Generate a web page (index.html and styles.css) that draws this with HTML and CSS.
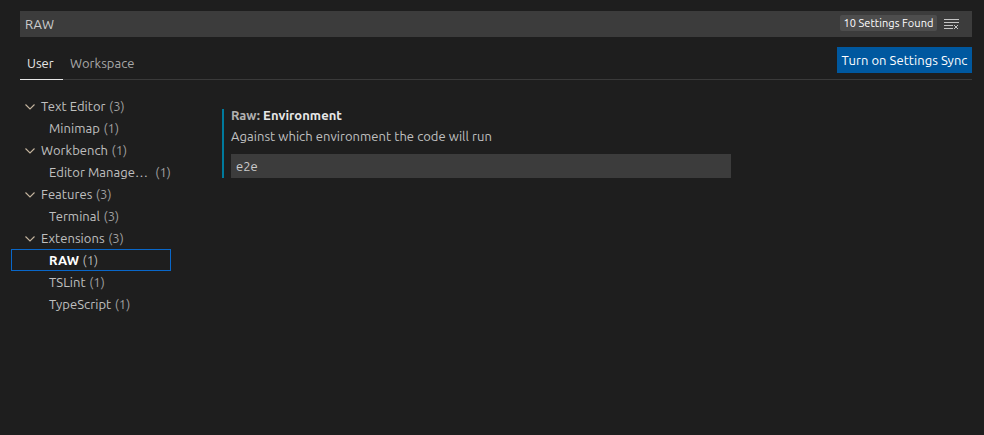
FILE: index.html
```html
<!DOCTYPE html>
<html lang="en">
<head>
<meta charset="utf-8">
<title>Settings</title>
<link rel="stylesheet" href="styles.css">
</head>
<body>
<main class="settings">
  <div class="search">
    <span class="query">RAW</span>
    <span class="badge">10 Settings Found</span>
    <svg class="clear" width="16" height="16" viewBox="0 0 16 16"><path d="M1 3.5h15M1 6.5h15M1 9.5h9M1 12.5h9" /><path d="M11 9l4 4M15 9l-4 4" /></svg>
  </div>
  <header class="header">
    <nav class="tabs">
      <a class="tab active">User</a>
      <a class="tab">Workspace</a>
    </nav>
    <button class="sync">Turn on Settings Sync</button>
  </header>
  <div class="body">
    <ul class="tree">
      <li class="row group"><svg class="chevron" width="10" height="6" viewBox="0 0 10 6"><path d="M.5.5L5 5 9.500.5"/></svg><span class="name">Text Editor</span><span class="count">(3)</span></li>
      <li class="row"><span class="name">Minimap</span><span class="count">(1)</span></li>
      <li class="row group"><svg class="chevron" width="10" height="6" viewBox="0 0 10 6"><path d="M.5.5L5 5 9.500.5"/></svg><span class="name">Workbench</span><span class="count">(1)</span></li>
      <li class="row"><span class="name clipped">Editor Manage…</span><span class="count">(1)</span></li>
      <li class="row group"><svg class="chevron" width="10" height="6" viewBox="0 0 10 6"><path d="M.5.5L5 5 9.500.5"/></svg><span class="name">Features</span><span class="count">(3)</span></li>
      <li class="row"><span class="name">Terminal</span><span class="count">(3)</span></li>
      <li class="row group"><svg class="chevron" width="10" height="6" viewBox="0 0 10 6"><path d="M.5.5L5 5 9.500.5"/></svg><span class="name">Extensions</span><span class="count">(3)</span></li>
      <li class="row selected"><span class="name">RAW</span><span class="count">(1)</span></li>
      <li class="row"><span class="name">TSLint</span><span class="count">(1)</span></li>
      <li class="row"><span class="name">TypeScript</span><span class="count">(1)</span></li>
    </ul>
    <section class="setting">
      <h2 class="title"><span class="category">Raw:</span> Environment</h2>
      <p class="description">Against which environment the code will run</p>
      <div class="field">e2e</div>
    </section>
  </div>
</main>
</body>
</html>
```
FILE: styles.css
```css
* { box-sizing: border-box; }
body {
  margin: 0;
  background: #1e1e1e;
  color: #c0c0c0;
  font: 13px/22px Ubuntu, "Noto Sans", sans-serif;
  letter-spacing: .05px;
  overflow: hidden;
}
.settings { height: 435px; padding: 11px 12px 0 11px; }
.search {
  display: flex;
  align-items: center;
  height: 26px;
  margin-left: 9px;
  padding: 0 13px 0 5px;
  background: #3c3c3c;
  color: #ccc;
}
.query { flex: 1; }
.badge {
  width: 97px;
  height: 16px;
  margin: 0 6px 2px 0;
  border-radius: 2px;
  background: #4d4d4d;
  color: #fff;
  font-size: 11px;
  line-height: 16px;
  text-align: center;
  white-space: nowrap;
}
.clear { fill: none; stroke: #c5c5c5; stroke-width: 1; }
.header {
  display: flex;
  justify-content: space-between;
  height: 43px;
  margin-left: 9px;
  border-bottom: 1px solid #3a3a3a;
}
.tabs { display: flex; padding-top: 15px; }
.tab { height: 28px; padding: 0 8px; color: #a8a8a8; }
.tab.active { width: 43px; margin-right: -1px; padding-left: 7px; border-bottom: 1px solid #e7e7e7; color: #e7e7e7; }
.sync {
  width: 135px;
  height: 26px;
  margin-top: 10px;
  padding: 0;
  border: 0;
  background: #00589f;
  color: #fff;
  font: inherit;
  letter-spacing: inherit;
  white-space: nowrap;
}
.body { display: flex; padding-top: 15px; }
.tree { width: 160px; margin: 0; padding: 0; list-style: none; }
.row {
  display: flex;
  gap: 3.5px;
  height: 22px;
  padding-left: 38px;
  line-height: 22px;
  white-space: nowrap;
}
.group { align-items: center; padding-left: 14px; }
.group .name { margin-left: 2.5px; }
.chevron { position: relative; top: 1px; fill: none; stroke: #c5b59f; stroke-width: 1.1; }
.count { color: #a0a0a0; }
.clipped { width: 103px; }
.selected { padding-left: 37px; border: 1px solid #0967c9; line-height: 20px; }
.selected .name { color: #fff; font-weight: 700; }
.selected .count { color: #b8b8b8; }
.setting {
  width: 509px;
  height: 69px;
  margin: 14px 0 0 51px;
  padding-left: 7px;
  border-left: 2px solid #007a9c;
}
.title { margin: 0; color: #e7e7e7; font-size: 13px; line-height: 13px; }
.category { color: #b0b0b0; }
.description { margin: 5px 0 9px; line-height: 18px; }
.field { height: 24px; padding-left: 5px; background: #3c3c3c; color: #ccc; line-height: 24px; }
```
